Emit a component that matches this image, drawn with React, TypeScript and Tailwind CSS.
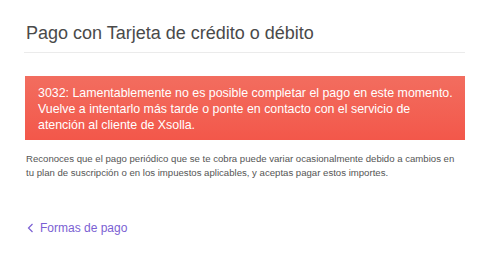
const App = () => {
  return (
    <div className="w-[482px] h-[270px] bg-white font-['Liberation_Sans',Arial,sans-serif] px-[24px] pt-[22px]">
      <div className="w-[441px]">
        <h1 className="text-[18px] leading-[22px] text-[#4a4a4a] pl-[2px] pb-[8px] border-b border-[#ebebeb]">
          Pago con Tarjeta de crédito o débito
        </h1>

        <div className="mt-[23px] ml-[1px] w-[440px] bg-gradient-to-b from-[#f26d5f] to-[#f3574a] pl-[13px] pr-[4px] pt-[9px] pb-[7px] text-white text-[12.4px] leading-[16px] whitespace-nowrap">
          3032: Lamentablemente no es posible completar el pago en este momento.
          <br />
          Vuelve a intentarlo más tarde o ponte en contacto con el servicio de
          <br />
          atención al cliente de Xsolla.
        </div>

        <p className="mt-[12px] pl-[2px] text-[9.6px] leading-[14px] text-[#555] whitespace-nowrap">
          Reconoces que el pago periódico que se te cobra puede variar ocasionalmente debido a cambios en
          <br />
          tu plan de suscripción o en los impuestos aplicables, y aceptas pagar estos importes.
        </p>

        <a className="mt-[40px] ml-[3px] flex items-center gap-[6px] text-[12px] leading-[16px] text-[#7b5fd3]">
          <svg width="7" height="10" viewBox="0 0 7 10" fill="none">
            <path d="M5.5 1 L1.5 5 L5.5 9" stroke="currentColor" strokeWidth="1.2" />
          </svg>
          Formas de pago
        </a>
      </div>
    </div>
  );
};

export default App;
